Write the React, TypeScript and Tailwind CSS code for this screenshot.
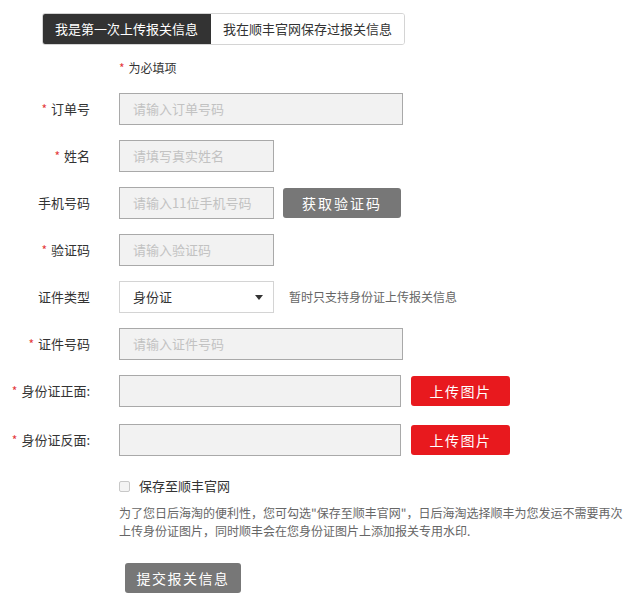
import React from 'react'

const font = { fontFamily: '"Noto Sans CJK SC", "Noto Sans", sans-serif' }

function Label({ text, required }: { text: string; required?: boolean }) {
    return (
        <div className="w-[90px] shrink-0 text-right text-[13px] leading-[20px] text-[#333]">
            {required && <span className="mr-[4px] text-[12px] text-[#e4393c]">*</span>}
            {text}
        </div>
    )
}

function Field({ placeholder, width }: { placeholder: string; width: string }) {
    return (
        <div className={`${width} h-[32px] border border-[#a9a9a9] bg-[#f2f2f2] flex items-center pl-[13px] text-[13px] text-[#c2c2c2]`}>
            {placeholder}
        </div>
    )
}

export default function App() {
    return (
        <div className="bg-white w-[632px] h-[613px] pt-[13px] text-[#333]" style={font}>
            <div className="ml-[42px] inline-flex h-[32px] border border-[#d4d4d4] rounded-[3px] overflow-hidden text-[13px]">
                <div className="bg-[#333] text-white flex items-center px-[13px] -my-px -ml-px">我是第一次上传报关信息</div>
                <div className="bg-white text-[#333] flex items-center px-[12px]">我在顺丰官网保存过报关信息</div>
            </div>

            <div className="ml-[119px] mt-[14px] text-[12px] leading-[18px] text-[#333]">
                <span className="text-[#e4393c] mr-[4px]">*</span>为必填项
            </div>

            <div className="mt-[16px] flex flex-col gap-[15px]">
                <div className="flex items-center">
                    <Label text="订单号" required />
                    <div className="ml-[29px]"><Field placeholder="请输入订单号码" width="w-[284px]" /></div>
                </div>
                <div className="flex items-center">
                    <Label text="姓名" required />
                    <div className="ml-[29px]"><Field placeholder="请填写真实姓名" width="w-[155px]" /></div>
                </div>
                <div className="flex items-center">
                    <Label text="手机号码" />
                    <div className="ml-[29px]"><Field placeholder="请输入11位手机号码" width="w-[155px]" /></div>
                    <button className="ml-[9px] w-[118px] h-[30px] rounded-[3px] bg-[#777] text-white text-[14px] tracking-[2px]">获取验证码</button>
                </div>
                <div className="flex items-center">
                    <Label text="验证码" required />
                    <div className="ml-[29px]"><Field placeholder="请输入验证码" width="w-[155px]" /></div>
                </div>
                <div className="flex items-center">
                    <Label text="证件类型" />
                    <div className="ml-[29px] w-[155px] h-[32px] border border-[#d4d4d4] bg-white flex items-center justify-between pl-[13px] pr-[10px] text-[13px] text-[#333]">
                        <span>身份证</span>
                        <svg width="8" height="5" viewBox="0 0 8 5"><path d="M0 0h8L4 5z" fill="#333" /></svg>
                    </div>
                    <div className="ml-[15px] text-[12px] text-[#666]">暂时只支持身份证上传报关信息</div>
                </div>
                <div className="flex items-center">
                    <Label text="证件号码" required />
                    <div className="ml-[29px]"><Field placeholder="请输入证件号码" width="w-[284px]" /></div>
                </div>
                <div className="flex items-center">
                    <Label text="身份证正面:" required />
                    <div className="ml-[29px]"><Field placeholder="" width="w-[282px]" /></div>
                    <button className="ml-[10px] w-[99px] h-[30px] rounded-[3px] bg-[#e8191e] text-white text-[14px] tracking-[1.5px]">上传图片</button>
                </div>
                <div className="flex items-center mt-[2px]">
                    <Label text="身份证反面:" required />
                    <div className="ml-[29px]"><Field placeholder="" width="w-[282px]" /></div>
                    <button className="ml-[10px] w-[99px] h-[30px] rounded-[3px] bg-[#e8191e] text-white text-[14px] tracking-[1.5px]">上传图片</button>
                </div>
            </div>

            <div className="ml-[119px] mt-[20px] flex items-center h-[20px]">
                <span className="w-[11px] h-[11px] rounded-[2px] border border-[#c8c8c8] bg-[#f4f4f4]"></span>
                <span className="ml-[9px] text-[13px] text-[#333]">保存至顺丰官网</span>
            </div>
            <p className="ml-[119px] mt-[8px] w-[508px] text-[12px] leading-[18px] text-[#666]">
                为了您日后海淘的便利性，您可勾选"保存至顺丰官网"，日后海淘选择顺丰为您发运不需要再次上传身份证图片，同时顺丰会在您身份证图片上添加报关专用水印.
            </p>
            <button className="ml-[125px] mt-[23px] w-[116px] h-[30px] rounded-[3px] bg-[#777] text-white text-[14px] tracking-[1.5px]">提交报关信息</button>
        </div>
    )
}
